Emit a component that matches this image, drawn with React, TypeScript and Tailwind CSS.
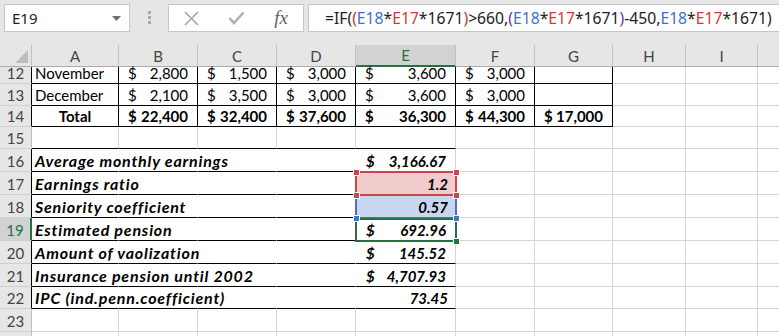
import type { ReactNode } from "react";

const W = [87, 79, 79, 79, 100, 79, 78, 73, 72, 40];
const LETTERS = ["A", "B", "C", "D", "E", "F", "G", "H", "I", ""];

const R = { l: "border-r-[#d4d4d4]", k: "border-r-black", n: "border-r-transparent" };
const B = { l: "border-b-[#d4d4d4]", k: "border-b-black" };

type Cell = { c?: ReactNode; r?: keyof typeof R; b?: keyof typeof B; cls?: string };

function Acc({ v, bold }: { v: string; bold?: boolean }) {
  return (
    <div className={`flex w-full justify-between pl-[9px] pr-[9px] ${bold ? "font-bold" : ""}`}>
      <span>$</span>
      <span>{v}</span>
    </div>
  );
}

function Money({ v }: { v: string }) {
  return (
    <div className="flex w-full justify-between pl-[10px] pr-[9px] font-bold italic">
      <span>$</span>
      <span>{v}</span>
    </div>
  );
}

function Val({ v }: { v: ReactNode }) {
  return <div className="w-full text-right pr-[7px] font-bold italic">{v}</div>;
}

function Label({ v }: { v: string }) {
  return (
    <div className="pl-[3px] font-bold italic whitespace-nowrap text-[16px] tracking-[0.8px]">{v}</div>
  );
}

function Row({
  n,
  h,
  cells,
  head = "k",
  active,
}: {
  n?: number;
  h: number;
  cells: Cell[];
  head?: "k" | "l" | "g";
  active?: boolean;
}) {
  const headBorder =
    head === "k"
      ? "border-r border-r-black"
      : head === "g"
        ? "border-r-2 border-r-[#217346]"
        : "border-r border-r-[#bfbfbf]";
  return (
    <div className="flex" style={{ height: h }}>
      <div
        className={`w-[32px] shrink-0 flex items-end justify-center pb-[1px] border-b border-b-[#d0d0d0] ${headBorder} ${
          active ? "bg-[#d2d2d2] text-[#217346]" : "bg-[#e6e6e6] text-[#444]"
        }`}
      >
        {n}
      </div>
      {W.map((w, i) => {
        const cell = cells[i] || {};
        return (
          <div
            key={i}
            style={{ width: w }}
            className={`shrink-0 flex items-end pb-[1px] border-r border-b ${R[cell.r || "l"]} ${B[cell.b || "l"]} ${cell.cls || ""}`}
          >
            {cell.c}
          </div>
        );
      })}
    </div>
  );
}

const K: Cell = { r: "k", b: "k" };
const T2: Cell = { r: "n", b: "k" };

function monthRow(name: string, vals: string[]): Cell[] {
  return [
    { ...K, c: <div className="pl-[3px]">{name}</div> },
    ...vals.map((v) => ({ ...K, c: <Acc v={v} /> })),
    K,
  ];
}

function t2Row(label: string, val: ReactNode, fill = ""): Cell[] {
  return [{ ...T2, c: <Label v={label} /> }, T2, T2, T2, { r: "l", b: "k", c: val, cls: fill }];
}

function Handle({ x, y, color }: { x: number; y: number; color: string }) {
  return (
    <div
      className="absolute w-[7px] h-[7px] border border-white"
      style={{ left: x - 3, top: y - 3, background: color }}
    />
  );
}

export default function App() {
  const blue = "text-[#3f6fcf]";
  const red = "text-[#d23a3a]";
  return (
    <div
      className="relative w-[779px] h-[336px] overflow-hidden bg-white text-[15px] text-black leading-[18px]"
      style={{ fontFamily: "Lato, 'Open Sans', sans-serif" }}
    >
      {/* toolbar */}
      <div className="h-[45px] bg-[#e6e6e6] flex items-start pt-[4px]">
        <div
          className="ml-[4px] w-[126px] h-[28px] bg-white border border-[#c6c6c6] flex items-center justify-between pl-[7px] pr-[8px] text-[15px] text-[#222]"
          style={{ fontFamily: "'Noto Sans', sans-serif" }}
        >
          <span>E19</span>
          <svg width="9" height="5" viewBox="0 0 9 5">
            <polygon points="0,0 9,0 4.5,5" fill="#6e6e6e" />
          </svg>
        </div>
        <div className="w-[38px] flex flex-col items-center gap-[2px] pt-[7px]">
          <div className="w-[3px] h-[3px] bg-[#a8a8a8]" />
          <div className="w-[3px] h-[3px] bg-[#a8a8a8]" />
          <div className="w-[3px] h-[3px] bg-[#a8a8a8]" />
        </div>
        <div className="w-[136px] h-[28px] bg-white border border-[#c6c6c6] flex items-center">
          <div className="w-[45px] flex justify-center">
            <svg width="15" height="15" viewBox="0 0 15 15">
              <path d="M1 1 L14 14 M14 1 L1 14" stroke="#a6a6a6" strokeWidth="1.6" />
            </svg>
          </div>
          <div className="w-[45px] flex justify-center">
            <svg width="17" height="14" viewBox="0 0 17 14">
              <path d="M1.5 7 L6 12 L15.5 1.5" stroke="#b0b0b0" strokeWidth="2.6" fill="none" />
            </svg>
          </div>
          <div
            className="w-[44px] flex justify-center italic text-[19px] text-[#606060]"
            style={{ fontFamily: "'Liberation Serif', serif" }}
          >
            fx
          </div>
        </div>
        <div
          className="ml-[4px] flex-1 h-[28px] bg-white border border-r-0 border-[#c6c6c6] flex items-center pl-[16px] whitespace-nowrap text-[15.7px] text-[#222]"
          style={{ fontFamily: "'Noto Sans', sans-serif" }}
        >
          =IF(<span className="text-[#b23b3b]">(</span>
          <span className={blue}>E18</span>*<span className={red}>E17</span>*1671
          <span className="text-[#b23b3b]">)</span>&gt;660,<span className="text-[#7030a0]">(</span>
          <span className={blue}>E18</span>*<span className={red}>E17</span>*1671
          <span className="text-[#7030a0]">)</span>-450,<span className={blue}>E18</span>*
          <span className={red}>E17</span>*1671)
        </div>
      </div>

      {/* column headers */}
      <div className="flex h-[22px] bg-[#e6e6e6] text-[#444]">
        <div className="w-[32px] shrink-0 border-r border-r-[#c0c0c0] border-b border-b-[#ababab] relative">
          <svg width="32" height="21" className="absolute left-0 top-0">
            <polygon points="28,5 28,18 15,18" fill="#bdbdbd" />
          </svg>
        </div>
        {W.map((w, i) => (
          <div
            key={i}
            style={{ width: w }}
            className={`shrink-0 flex items-center justify-center border-r border-r-[#c0c0c0] ${
              i === 4
                ? "bg-[#d2d2d2] text-[#217346] border-b-2 border-b-[#217346]"
                : "border-b border-b-[#ababab]"
            }`}
          >
            {LETTERS[i]}
          </div>
        ))}
      </div>

      <Row n={12} h={17} cells={monthRow("November", ["2,800", "1,500", "3,000", "3,600", "3,000"])} />
      <Row n={13} h={22} cells={monthRow("December", ["2,100", "3,500", "3,000", "3,600", "3,000"])} />
      <Row
        n={14}
        h={21}
        cells={[
          { ...K, c: <div className="w-full text-center font-bold">Total</div> },
          ...["22,400", "32,400", "37,600", "36,300", "44,300", "17,000"].map((v) => ({
            ...K,
            c: <Acc v={v} bold />,
          })),
        ]}
      />
      <Row n={15} h={22} head="l" cells={[{ b: "k" }, { b: "k" }, { b: "k" }, { b: "k" }, { b: "k" }]} />
      <Row n={16} h={23} cells={t2Row("Average monthly earnings", <Money v="3,166.67" />)} />
      <Row n={17} h={23} cells={t2Row("Earnings ratio", <Val v="1.2" />, "bg-[#f2cbcd]")} />
      <Row n={18} h={23} cells={t2Row("Seniority coefficient", <Val v="0.57" />, "bg-[#c9d6ef]")} />
      <Row n={19} h={23} head="g" active cells={t2Row("Estimated pension", <Money v="692.96" />)} />
      <Row n={20} h={23} cells={t2Row("Amount of vaolization", <Money v="145.52" />)} />
      <Row n={21} h={23} cells={t2Row("Insurance pension until 2002", <Money v="4,707.93" />)} />
      <Row n={22} h={22} cells={t2Row("IPC (ind.penn.coefficient)", <Val v="73.45" />)} />
      <Row n={23} h={23} head="l" cells={[]} />
      <Row h={23} head="l" cells={[]} />

      {/* selection overlays */}
      <div className="absolute left-[355px] top-[171px] w-[102px] h-[25px] border-2 border-[#c8474e]" />
      <div className="absolute left-[355px] top-[195px] w-[102px] h-[24px] border-2 border-t-0 border-[#4472c4]" />
      <div className="absolute left-[355px] top-[218px] w-[102px] h-[24px] border-2 border-[#217346]" />
      <Handle x={356} y={172} color="#c8474e" />
      <Handle x={456} y={172} color="#c8474e" />
      <Handle x={356} y={195} color="#c8474e" />
      <Handle x={456} y={195} color="#c8474e" />
      <Handle x={356} y={218} color="#4472c4" />
      <Handle x={456} y={218} color="#4472c4" />
      <Handle x={456} y={241} color="#217346" />
    </div>
  );
}
